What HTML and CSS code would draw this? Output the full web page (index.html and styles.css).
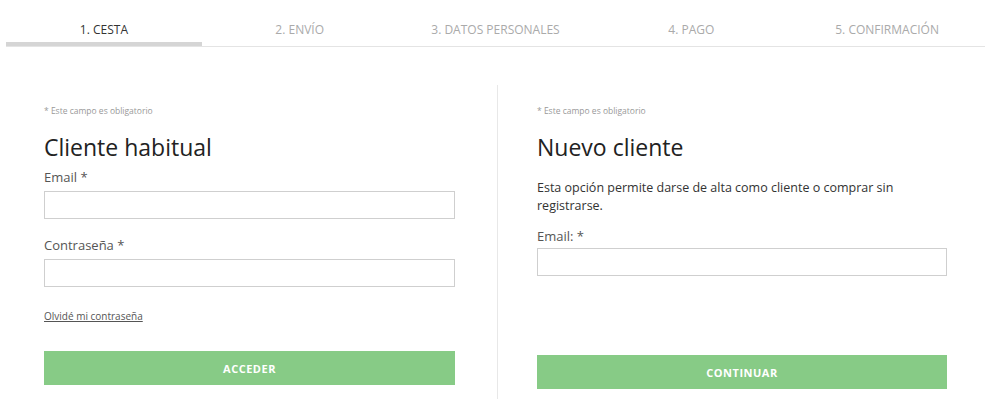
FILE: index.html
```html
<!DOCTYPE html>
<html lang="es">
<head>
  <meta charset="UTF-8" />
  <title>Checkout - Cesta</title>
  <link rel="stylesheet" href="styles.css">
</head>
<body>
  <!-- Steps -->
  <ul class="steps">
    <li class="active">1. Cesta</li>
    <li>2. Envío</li>
    <li>3. Datos personales</li>
    <li>4. Pago</li>
    <li>5. Confirmación</li>
  </ul>

  <div class="panels">
    <!-- Returning customer -->
    <div class="panel left">
      <p class="note">* Este campo es obligatorio</p>
      <h2>Cliente habitual</h2>
      <label for="email">Email *</label>
      <input type="text" id="email">
      <label for="password" class="second">Contraseña *</label>
      <input type="password" id="password">
      <a href="#" class="forgot">Olvidé mi contraseña</a>
      <button class="login">Acceder</button>
    </div>

    <!-- New customer -->
    <div class="panel right">
      <p class="note">* Este campo es obligatorio</p>
      <h2>Nuevo cliente</h2>
      <p class="intro">Esta opción permite darse de alta como cliente o comprar sin registrarse.</p>
      <label for="newEmail" class="tight">Email: *</label>
      <input type="text" id="newEmail" class="new-email">
      <button class="continue">Continuar</button>
    </div>
  </div>
</body>
</html>
```

FILE: styles.css
```css
body {
  margin: 0;
  font-family: 'Open Sans', 'Liberation Sans', sans-serif;
  background: white;
  color: #333;
}

.steps {
  display: flex;
  list-style: none;
  margin: 0 15px 0 6px;
  padding: 0;
  border-bottom: 1px solid #e4e4e4;
}

.steps li {
  flex: 1;
  text-align: center;
  text-transform: uppercase;
  font-size: 12px;
  line-height: 16px;
  color: #aaa;
  padding: 22px 0 4px;
  border-bottom: 4px solid transparent;
}

.steps li.active {
  color: #333;
  border-bottom-color: #d5d5d5;
}

.panels {
  display: flex;
  padding: 38px 0 0 44px;
}

.panel {
  display: flex;
  flex-direction: column;
  align-items: flex-start;
}

.left {
  width: 411px;
  padding: 20px 42px 10px 0;
  border-right: 1px solid #e8e8e8;
}

.right {
  width: 410px;
  padding: 20px 0 10px 39px;
}

.note {
  margin: 0;
  font-size: 8.5px;
  line-height: 12px;
  color: #999;
}

h2 {
  margin: 15px 0 0;
  font-size: 23px;
  line-height: 30px;
  font-weight: normal;
  color: #222;
}

label {
  display: block;
  margin-top: 6px;
  font-size: 13px;
  line-height: 18px;
  color: #555;
}

label.second {
  margin-top: 17px;
}

label.tight {
  margin-top: 12px;
}

input {
  box-sizing: border-box;
  width: 100%;
  height: 28px;
  margin-top: 5px;
  border: 1px solid #cfcfcf;
  padding: 4px 8px;
  font-family: inherit;
  font-size: 13px;
}

input.new-email {
  margin-top: 3px;
}

.forgot {
  margin-top: 22px;
  font-size: 10px;
  line-height: 14px;
  color: #555;
}

.intro {
  margin: 17px 0 0;
  font-size: 12.5px;
  line-height: 18px;
  color: #333;
}

button {
  width: 100%;
  height: 34px;
  border: none;
  background: #87cb86;
  color: white;
  font-family: inherit;
  font-size: 11px;
  font-weight: bold;
  letter-spacing: 0.5px;
  text-transform: uppercase;
  cursor: pointer;
}

.login {
  margin-top: 28px;
}

.continue {
  margin-top: 79px;
}
```
